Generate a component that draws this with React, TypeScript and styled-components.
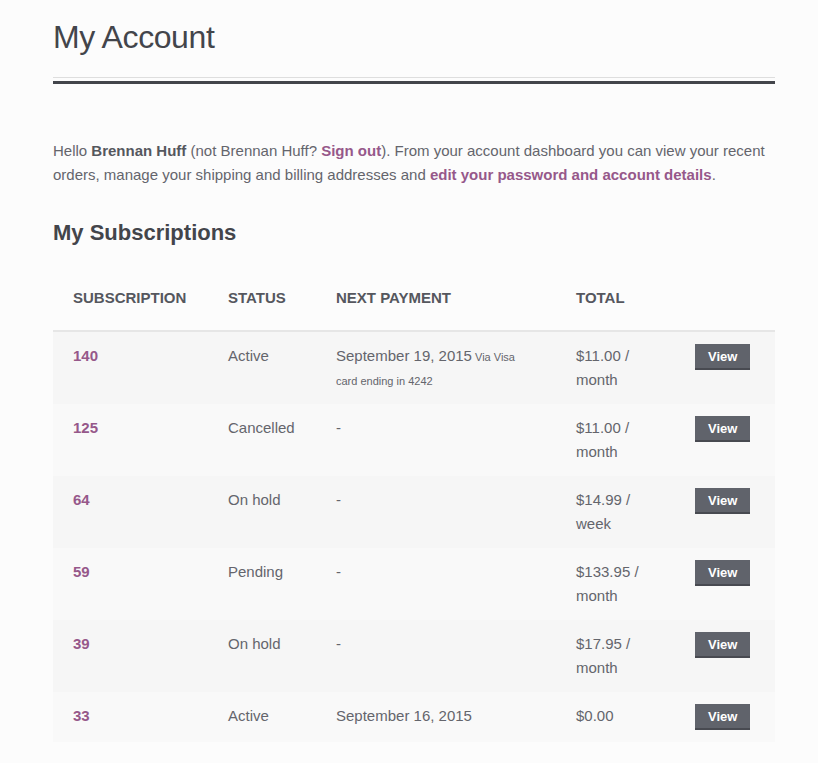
import styled, { createGlobalStyle } from "styled-components";

const GlobalStyle = createGlobalStyle`
  html, body {
    margin: 0;
    padding: 0;
    background: #fcfcfc;
  }
  body {
    font-family: "Liberation Sans", Arial, sans-serif;
    color: #64656c;
  }
`;

const Page = styled.div`
  width: 722px;
  padding: 18px 43px 0 53px;
`;

const Title = styled.h1`
  margin: 0;
  padding-bottom: 21px;
  font-size: 32px;
  line-height: 38px;
  font-weight: 300;
  letter-spacing: -0.4px;
  color: #43454b;
  border-bottom: 1px solid #dedede;
`;

const Rule = styled.div`
  margin-top: 3px;
  height: 3px;
  background: #43454b;
`;

const Intro = styled.p`
  margin: 55px 0 0;
  font-size: 15px;
  line-height: 24px;
  color: #64656c;
`;

const Strong = styled.strong`
  font-weight: 700;
  color: #55575e;
`;

const Link = styled.a`
  color: #96588a;
  font-weight: 700;
  text-decoration: none;
`;

const Heading = styled.h2`
  margin: 31px 0 10px;
  font-size: 22px;
  line-height: 30px;
  font-weight: 700;
  color: #43454b;
`;

const Table = styled.table`
  width: 722px;
  border-collapse: collapse;
  table-layout: fixed;
`;

const Th = styled.th`
  padding: 28px 20px 20px;
  text-align: left;
  font-size: 15px;
  line-height: 24px;
  font-weight: 700;
  text-transform: uppercase;
  color: #55575e;
  border-bottom: 2px solid #e6e6e6;
`;

const Row = styled.tr<{ $odd: boolean }>`
  background: ${(p) => (p.$odd ? "#f6f6f6" : "#f9f9f9")};
`;

const Td = styled.td`
  padding: 12px 20px;
  vertical-align: top;
  font-size: 15px;
  line-height: 24px;
  color: #64656c;
`;

const Small = styled.small`
  font-size: 11px;
  line-height: 1;
`;

const ViewButton = styled.a`
  display: inline-block;
  padding: 5px 13px 3px;
  font-size: 13px;
  line-height: 16px;
  font-weight: 700;
  color: #fff;
  background: #60636b;
  border-bottom: 2px solid #484a51;
  text-decoration: none;
`;

type Sub = {
  id: number;
  status: string;
  next: string;
  via?: string;
  total: string;
};

const subs: Sub[] = [
  { id: 140, status: "Active", next: "September 19, 2015", via: "Via Visa card ending in 4242", total: "$11.00 / month" },
  { id: 125, status: "Cancelled", next: "-", total: "$11.00 / month" },
  { id: 64, status: "On hold", next: "-", total: "$14.99 / week" },
  { id: 59, status: "Pending", next: "-", total: "$133.95 / month" },
  { id: 39, status: "On hold", next: "-", total: "$17.95 / month" },
  { id: 33, status: "Active", next: "September 16, 2015", total: "$0.00" },
];

const App = () => {
  return (
    <>
      <GlobalStyle />
      <Page>
        <Title>My Account</Title>
        <Rule />
        <Intro>
          Hello <Strong>Brennan Huff</Strong> (not Brennan Huff?{" "}
          <Link href="#">Sign out</Link>). From your account dashboard you can
          view your recent orders, manage your shipping and billing addresses
          and <Link href="#">edit your password and account details</Link>.
        </Intro>
        <Heading>My Subscriptions</Heading>
        <Table>
          <colgroup>
            <col style={{ width: 155 }} />
            <col style={{ width: 108 }} />
            <col style={{ width: 240 }} />
            <col style={{ width: 119 }} />
            <col style={{ width: 100 }} />
          </colgroup>
          <thead>
            <tr>
              <Th>Subscription</Th>
              <Th>Status</Th>
              <Th>Next Payment</Th>
              <Th>Total</Th>
              <Th />
            </tr>
          </thead>
          <tbody>
            {subs.map((s, i) => (
              <Row key={s.id} $odd={i % 2 === 0}>
                <Td>
                  <Link href="#">{s.id}</Link>
                </Td>
                <Td>{s.status}</Td>
                <Td>
                  {s.next}
                  {s.via && <Small> {s.via}</Small>}
                </Td>
                <Td>{s.total}</Td>
                <Td>
                  <ViewButton href="#">View</ViewButton>
                </Td>
              </Row>
            ))}
          </tbody>
        </Table>
      </Page>
    </>
  );
};

export default App;
